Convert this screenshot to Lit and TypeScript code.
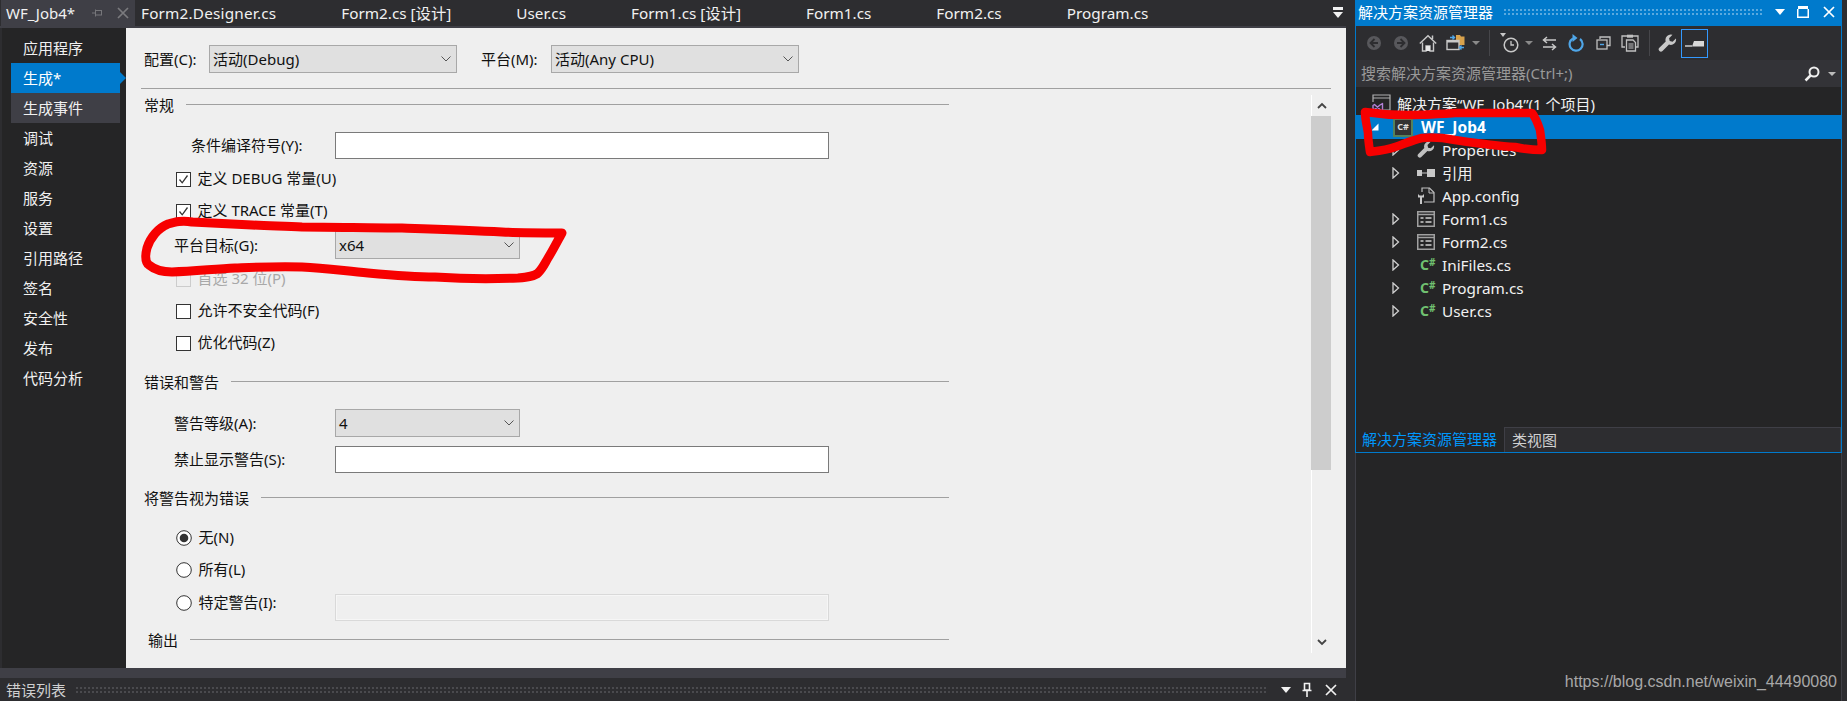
import { LitElement, html, css } from "lit";
import { customElement } from "lit/decorators.js";

const chev = html`<svg width="10" height="6" viewBox="0 0 10 6"><path d="M.5.5 5 5 9.500.5" fill="none" stroke="#555" stroke-width="1"/></svg>`;
const check = html`<svg width="13" height="13" viewBox="0 0 13 13"><path d="M2.500 6.500 5.200 9.800 10.500 2.500" fill="none" stroke="#333" stroke-width="1.300"/></svg>`;
const treeArrow = html`<svg width="8" height="12" viewBox="0 0 8 12"><path d="M1 1 6.500 6 1 11z" fill="#252526" stroke="#d0d0d0" stroke-width="1.300"/></svg>`;
const wrench = (s: number, c: string) => html`<svg width=${s} height=${s} viewBox="0 0 18 18"><path fill=${c} d="M17 4.200l-3.200 3.100-2.700-.6-.6-2.700L13.700.8A5 5 0 0 0 7.300 7L1.300 13a2.100 2.100 0 1 0 3 3L10.400 10A5 5 0 0 0 17 4.200z"/></svg>`;
const formIcon = html`<svg width="18" height="16" viewBox="0 0 18 16"><rect x=".75" y=".75" width="16.500" height="14.500" fill="#252526" stroke="#a0a0a0" stroke-width="1.500"/><path d="M1 3.500H17" stroke="#a0a0a0" stroke-width="1.500"/><path d="M3.500 7H6.500M3.500 11H6.500M8.500 7H14.500M8.500 11H14.500" stroke="#d0d0d0" stroke-width="1.600"/></svg>`;

type Node = { t: string; i: unknown };
const csIcon = html`<span class="cs">C<sup>#</sup></span>`;
const children: Node[] = [
  { t: "Properties", i: wrench(18, "#c0c0c0") },
  { t: "引用", i: html`<svg width="18" height="8" viewBox="0 0 18 8"><rect y="1" width="5" height="6" fill="#c8c8c8"/><path d="M5 4H10" stroke="#c8c8c8"/><rect x="10" width="8" height="8" fill="#c8c8c8"/></svg>` },
  { t: "App.config", i: html`<svg width="18" height="18" viewBox="0 0 18 18"><path d="M5 5V1H12.500L17 5.500V15H7" fill="none" stroke="#c0c0c0" stroke-width="1.200"/><path d="M12 1V6H17" fill="none" stroke="#c0c0c0"/><path d="M1 7V10.500H3V17H5V10.500H7V7L5.500 8.500H2.500z" fill="#c8c8c8"/></svg>` },
  { t: "Form1.cs", i: formIcon },
  { t: "Form2.cs", i: formIcon },
  { t: "IniFiles.cs", i: csIcon },
  { t: "Program.cs", i: csIcon },
  { t: "User.cs", i: csIcon },
];

@customElement("app-root")
export class AppRoot extends LitElement {
  static styles = css`
    :host { display: block; position: relative; width: 1847px; height: 701px; overflow: hidden; background: #2d2d30;
      font-family: "Noto Sans", "Noto Sans CJK SC", sans-serif; font-size: 15px; line-height: 20px; color: #111; }
    * { box-sizing: border-box; }
    svg { display: block; flex: none; }
    .app { display: flex; height: 701px; }
    .left { width: 1346px; display: flex; flex-direction: column; }
    .tabs { height: 26px; display: flex; align-items: center; gap: 65px; color: #f1f1f1; padding-right: 3px; font-size: 15.300px; white-space: nowrap; }
    .tabs > span:first-of-type { letter-spacing: 0.2px; }
    .tab-active { width: 134px; height: 26px; margin: 0 -59px 0 1px; background: #3f3f46; display: flex; align-items: center; padding-left: 5px; font-size: 15px; }
    .tab-active .name { width: 85px; }
    .tab-active .x { margin-left: 14px; }
    .more { margin-left: auto; }
    .strip { height: 2px; background: #3f3f46; flex: none; }
    .body { height: 640px; display: flex; flex: none; padding-left: 2px; }
    .nav { width: 124px; background: #252526; padding: 5px 6px 0 9px; color: #f1f1f1; }
    .nav div { height: 30px; line-height: 30px; padding-left: 12px; position: relative; }
    .nav .sel { background: #007acc; color: #fff; }
    .nav .sel::after { content: ""; position: absolute; left: 100%; top: 9px; border: 6px solid transparent; border-left-color: #007acc; }
    .nav .hov { background: #3f3f46; }
    .panel { flex: 1; background: #efefef; padding: 17px 15px 0; display: flex; flex-direction: column; }
    .cfg { height: 28px; display: flex; align-items: center; padding-left: 3px; }
    .cfg .l1 { width: 65px; } .cfg .l2 { width: 70px; margin-left: 24px; }
    .combo { height: 28px; background: #e0e0e0; border: 1px solid #a8a8a8; display: flex; align-items: center; justify-content: space-between; padding: 0 5px 0 3px; }
    .w248 { width: 248px; } .w185 { width: 185px; }
    .rule { height: 1px; background: #a0a0a0; margin-top: 15px; margin-bottom: 6px; flex: none; }
    .scroll { flex: 1; display: flex; min-height: 0; height: 558px; align-items: flex-start; }
    .content { flex: 1; }
    .head { height: 22px; width: 808px; display: flex; align-items: center; gap: 12px; padding-left: 3px; }
    .head span { margin-bottom: 2px; }
    .head i { flex: 1; height: 1px; background: #a0a0a0; margin-bottom: 4px; }
    .input { width: 494px; height: 27px; background: #fff; border: 1px solid #7a7a7a; }
    .input.off { background: #efefef; border: 1px solid #d9d9d9; box-shadow: inset 0 0 0 1px #f6f6f6; }
    .field { display: flex; align-items: center; padding-left: 33px; }
    .field label { width: 161px; padding-bottom: 1px; }
    .indent { padding-left: 50px; } .indent label { width: 144px; }
    .c { height: 32px; display: flex; align-items: center; gap: 7px; padding-left: 34.500px; padding-bottom: 2px; }
    .c .box, .c svg { margin-top: 2px; }
    .box { width: 15px; height: 15px; background: #fff; border: 1px solid #333; display: flex; align-items: center; justify-content: center; flex: none; }
    .box svg { margin: 0; }
    .c.dis { color: #a8a8a8; } .c.dis .box { border-color: #ccc; background: #efefef; }
    .sb { width: 20px; height: 558px; border-left: 1px solid #fff; display: flex; flex-direction: column; align-items: center; flex: none; }
    .sb .up { height: 21px; display: flex; align-items: center; }
    .sb .thumb { width: 20px; height: 354px; background: #cdcdcd; margin-left: -1px; }
    .sb .dn { margin-top: auto; height: 21px; display: flex; align-items: center; margin-bottom: 0; }
    .band { height: 10px; background: #3f3f46; flex: none; }
    .errbar { height: 23px; display: flex; align-items: center; padding: 0 9px 0 6px; color: #d0d0d0; }
    .grip { background-image: radial-gradient(circle at 1px 1px, #4a4a4e 0.8px, transparent 1px); background-size: 4px 4px; height: 6px; flex: 1; }
    .errbar .grip { margin: 0 14px 0 10px; }
    .errbar .ic { display: flex; align-items: center; gap: 11px; }

    .split { width: 9px; }
    .right { width: 487px; display: flex; flex-direction: column; }
    .expl { height: 453px; flex: none; border: 1px solid #007acc; border-width: 0 1px 1px; display: flex; flex-direction: column; }
    .title { height: 26px; flex: none; background: #007acc; color: #fff; display: flex; align-items: center; padding: 0 7px 2px 3px; margin: 0 -1px; }
    .title .grip { background-image: radial-gradient(circle at 1px 1px, #5aa9df 0.8px, transparent 1px); margin: 0 12px 0 11px; }
    .title .ic { display: flex; align-items: center; gap: 12px; }
    .tb { height: 34px; flex: none; display: flex; align-items: center; padding-left: 4px; }
    .slot { height: 30px; display: flex; align-items: center; justify-content: center; flex: none; }
    .s27 { width: 27px; } .s28 { width: 28px; } .s14 { width: 14px; } .s6 { width: 6px; } .s7 { width: 7px; } .s24 { width: 24px; } .s26 { width: 26px; } .s25 { width: 25px; }
    .sep { width: 1px; height: 26px; background: #46464a; flex: none; }
    .pinb { width: 27px; height: 29px; border: 1px solid #3399ff; display: flex; align-items: center; justify-content: center; flex: none; }
    .search { height: 27px; flex: none; background: #333337; color: #999; display: flex; align-items: center; padding: 0 5px; }
    .search span { flex: 1; padding-bottom: 1px; }
    .tree { flex: 1; background: #252526; padding-top: 5px; color: #f1f1f1; }
    .row { height: 23px; display: flex; align-items: center; }
    .row.s { height: 24px; background: #007acc; color: #fff; font-weight: 700; padding-left: 15px; font-size: 15.500px; }
    .r0 { padding-left: 16px; }
    .r2 { padding-left: 36px; padding-bottom: 1px; font-size: 15.300px; }
    .ar { width: 25px; display: flex; }
    .s .ar { width: 22px; }
    .iw { width: 25px; display: flex; align-items: center; }
    .s .iw { width: 28px; }
    .cs { color: #70c070; font-weight: 700; font-size: 14px; line-height: 14px; display: flex; padding-left: 3px; }
    .cs sup { font-size: 10px; line-height: 9px; margin: 0; }
    .proj { width: 20px; height: 19px; border: 2px solid #55815a; background: #333; color: #ddd; font-size: 9px; font-weight: 700; line-height: 14px; display: flex; justify-content: center; }
    .btabs { height: 25px; flex: none; display: flex; background: #252526; }
    .b1 { width: 148px; padding-left: 6px; color: #0097fb; line-height: 25px; white-space: nowrap; }
    .b2 { flex: 1; background: #2d2d30; border: 1px solid #3f3f46; border-bottom: 0; color: #d0d0d0; padding-left: 7px; line-height: 24px; }
    .lower { flex: 1; background: #252526; border: 1px solid #3f3f46; border-width: 0 1px; margin-right: 0; }
    .wm { position: absolute; right: 10px; bottom: 9px; color: #a8a8a8; font: 16px/20px "Liberation Sans", sans-serif; }
    .ink { position: absolute; inset: 0; pointer-events: none; }
  `;

  render() {
    const tabs = ["Form2.Designer.cs", "Form2.cs [设计]", "User.cs", "Form1.cs [设计]", "Form1.cs", "Form2.cs", "Program.cs"];
    const nav = ["应用程序", "生成*", "生成事件", "调试", "资源", "服务", "设置", "引用路径", "签名", "安全性", "发布", "代码分析"];
    const smallX = (c: string) => html`<svg width="12" height="12" viewBox="0 0 12 12"><path d="M1 1 11 11M11 1 1 11" stroke=${c} stroke-width="1.700"/></svg>`;
    return html`
      <div class="app">
        <div class="left">
          <div class="tabs">
            <div class="tab-active">
              <span class="name">WF_Job4*</span>
              <svg width="12" height="12" viewBox="0 0 12 12"><path d="M1 6H4M4.500 2.500V9.500M4.500 3.500H10M4.500 8H10M10.500 3V8.500" fill="none" stroke="#76767a"/></svg>
              <span class="x">${smallX("#7a7a7e")}</span>
            </div>
            ${tabs.map((t) => html`<span>${t}</span>`)}
            <svg class="more" width="10" height="12" viewBox="0 0 10 12"><rect width="10" height="3" y="0" fill="#f1f1f1"/><path d="M0 5H10L5 11z" fill="#f1f1f1"/></svg>
          </div>
          <div class="strip"></div>
          <div class="body">
            <div class="nav">
              ${nav.map((n, i) => html`<div class=${i === 1 ? "sel" : i === 2 ? "hov" : ""}>${n}</div>`)}
            </div>
            <div class="panel">
              <div class="cfg">
                <span class="l1">配置(C):</span>
                <div class="combo w248"><span>活动(Debug)</span>${chev}</div>
                <span class="l2">平台(M):</span>
                <div class="combo w248"><span>活动(Any CPU)</span>${chev}</div>
              </div>
              <div class="rule"></div>
              <div class="scroll">
                <div class="content">
                  <div class="head"><span>常规</span><i></i></div>
                  <div class="field indent" style="margin-top:15px"><label>条件编译符号(Y):</label><div class="input"></div></div>
                  <div class="c" style="margin-top:4px"><div class="box">${check}</div>定义 DEBUG 常量(U)</div>
                  <div class="c"><div class="box">${check}</div>定义 TRACE 常量(T)</div>
                  <div class="field" style="margin-top:4px"><label>平台目标(G):</label><div class="combo w185"><span>x64</span>${chev}</div></div>
                  <div class="c dis" style="margin-top:4px"><div class="box"></div>首选 32 位(P)</div>
                  <div class="c"><div class="box"></div>允许不安全代码(F)</div>
                  <div class="c"><div class="box"></div>优化代码(Z)</div>
                  <div class="head" style="margin-top:13px"><span>错误和警告</span><i></i></div>
                  <div class="field" style="margin-top:15px"><label>警告等级(A):</label><div class="combo w185"><span>4</span>${chev}</div></div>
                  <div class="field" style="margin-top:9px"><label>禁止显示警告(S):</label><div class="input"></div></div>
                  <div class="head" style="margin-top:15px"><span>将警告视为错误</span><i></i></div>
                  <div class="c" style="margin-top:12px">
                    <svg width="16" height="16" viewBox="0 0 16 16"><circle cx="8" cy="8" r="7.300" fill="#fff" stroke="#333"/><circle cx="8" cy="8" r="4.300" fill="#333"/></svg>无(N)
                  </div>
                  <div class="c">
                    <svg width="16" height="16" viewBox="0 0 16 16"><circle cx="8" cy="8" r="7.300" fill="#fff" stroke="#333"/></svg>所有(L)
                  </div>
                  <div class="field" style="align-items:flex-start;height:35px">
                    <label class="c" style="padding-left:1.500px">
                      <svg width="16" height="16" viewBox="0 0 16 16"><circle cx="8" cy="8" r="7.300" fill="#fff" stroke="#333"/></svg>特定警告(I):
                    </label>
                    <div class="input off" style="margin-top:8px"></div>
                  </div>
                  <div class="head" style="margin-top:9px;padding-left:7px"><span>输出</span><i></i></div>
                </div>
                <div class="sb">
                  <div class="up"><svg width="10" height="7" viewBox="0 0 10 7"><path d="M1 6 5 2 9 6" fill="none" stroke="#444" stroke-width="1.800"/></svg></div>
                  <div class="thumb"></div>
                  <div class="dn"><svg width="10" height="7" viewBox="0 0 10 7"><path d="M1 1 5 5 9 1" fill="none" stroke="#444" stroke-width="1.800"/></svg></div>
                </div>
              </div>
            </div>
          </div>
          <div class="band"></div>
          <div class="errbar">
            <span>错误列表</span>
            <div class="grip"></div>
            <div class="ic">
              <svg width="10" height="6" viewBox="0 0 10 6"><path d="M0 0H10L5 6z" fill="#f1f1f1"/></svg>
              <svg width="10" height="15" viewBox="0 0 10 15"><path d="M2.500 1.500H7.500V8H2.500zM.5 8.500H9.500M5 9V15" fill="none" stroke="#f1f1f1" stroke-width="1.600"/></svg>
              <span style="margin-left:2px">${smallX("#f1f1f1")}</span>
            </div>
          </div>
        </div>
        <div class="split"></div>
        <div class="right">
          <div class="expl">
            <div class="title">
              <span>解决方案资源管理器</span>
              <div class="grip"></div>
              <div class="ic">
                <svg width="10" height="6" viewBox="0 0 10 6"><path d="M0 0H10L5 6z" fill="#fff"/></svg>
                <svg width="12" height="12" viewBox="0 0 12 12"><path d="M1 1.500H11M.75 3V11.250H11.250V3" fill="none" stroke="#fff" stroke-width="1.500"/><path d="M1 1.500H11" stroke="#fff" stroke-width="3"/></svg>
                <span style="margin-left:2px">${smallX("#fff")}</span>
              </div>
            </div>
            <div class="tb">
              <div class="slot s27"><svg width="16" height="16" viewBox="0 0 16 16"><circle cx="8" cy="8" r="7" fill="#58585c"/><path d="M8.500 4 4.500 8 8.500 12M5 8H12" fill="none" stroke="#2d2d30" stroke-width="1.800"/></svg></div>
              <div class="slot s27"><svg width="16" height="16" viewBox="0 0 16 16"><circle cx="8" cy="8" r="7" fill="#58585c"/><path d="M7.500 4 11.500 8 7.500 12M11 8H4" fill="none" stroke="#2d2d30" stroke-width="1.800"/></svg></div>
              <div class="slot s27"><svg width="18" height="18" viewBox="0 0 18 18"><path d="M.8 9.500 9 1.800 17.200 9.500M13.500 1.500V5" fill="none" stroke="#c8c8c8" stroke-width="1.500"/><path d="M3.500 8.500V17H7V12H11V17H14.500V8.500" fill="none" stroke="#c8c8c8" stroke-width="1.400"/><rect x="7" y="12" width="4" height="5" fill="#e8e8e8"/></svg></div>
              <div class="slot s28"><svg width="19" height="18" viewBox="0 0 19 18"><path d="M10 1H14L15 2.500H18.500V11H10z" fill="#d8a24c"/><rect x="1" y="6.500" width="12" height="9" fill="#2d2d30" stroke="#c8c8c8" stroke-width="1.400"/><path d="M1 7.500H13" stroke="#c8c8c8" stroke-width="2"/><path d="M4 3.500H8M6.500 1.500 8.500 3.500 6.500 5.500M18 13.500H13.500M15.500 11.500 13.500 13.500 15.500 15.500" fill="none" stroke="#4fa6e8" stroke-width="1.400"/></svg></div>
              <div class="slot s14"><svg width="8" height="4" viewBox="0 0 8 4"><path d="M0 0H8L4 4z" fill="#8a8a8a"/></svg></div>
              <div class="slot s6"></div>
              <div class="sep"></div>
              <div class="slot s24" style="margin-left:8px"><svg width="20" height="20" viewBox="0 0 20 20"><path d="M0 0H6L3 4z" fill="#c8c8c8"/><circle cx="11" cy="12" r="6.800" fill="none" stroke="#c8c8c8" stroke-width="1.500"/><path d="M11 8V12H14" fill="none" stroke="#c8c8c8" stroke-width="1.300"/></svg></div>
              <div class="slot s14"><svg width="8" height="4" viewBox="0 0 8 4"><path d="M0 0H8L4 4z" fill="#8a8a8a"/></svg></div>
              <div class="slot s26"><svg width="15" height="15" viewBox="0 0 15 15"><path d="M14 4H2M5 1 1.500 4 5 7M1 11H13M10 8 13.500 11 10 14" fill="none" stroke="#c8c8c8" stroke-width="1.500"/></svg></div>
              <div class="slot s28"><svg width="16" height="18" viewBox="0 0 16 18"><path d="M5 4.500A6.500 6.500 0 1 0 12 5" fill="none" stroke="#4fa6e8" stroke-width="2.200"/><path d="M6.500 0V8L1.500 4z" fill="#4fa6e8" transform="rotate(180 5.500 4)"/></svg></div>
              <div class="slot s27"><svg width="15" height="14" viewBox="0 0 15 14"><path d="M4 3V1H14V9.500H11" fill="none" stroke="#c0c0c0" stroke-width="1.300"/><rect x="1" y="4" width="10" height="9" fill="#2d2d30" stroke="#c0c0c0" stroke-width="1.300"/><path d="M4 8.500H8" stroke="#4fa6e8" stroke-width="1.400"/></svg></div>
              <div class="slot s25"><svg width="18" height="18" viewBox="0 0 18 18"><path d="M4 13H1V2H6M12 2H17V13H15" fill="none" stroke="#c0c0c0" stroke-width="1.300"/><rect x="6" y=".7" width="6" height="3" fill="#c0c0c0"/><path d="M5.500 6H12L14.500 8.500V17H5.500z" fill="#2d2d30" stroke="#c0c0c0" stroke-width="1.300"/><path d="M7.500 10H12.500M7.500 12H12.500M7.500 14H12.500" stroke="#c0c0c0"/></svg></div>
              <div class="slot s7"></div>
              <div class="sep"></div>
              <div class="slot s24" style="margin-left:5px">${wrench(19, "#c8c8c8")}</div>
              <div class="pinb" style="margin-left:2px"><svg width="19" height="7" viewBox="0 0 19 7"><path d="M0 6H7" stroke="#d8d8d8" stroke-width="1.400"/><path d="M7 6.500H19V1H9z" fill="#d8d8d8"/></svg></div>
            </div>
            <div class="search">
              <span>搜索解决方案资源管理器(Ctrl+;)</span>
              <svg width="16" height="16" viewBox="0 0 16 16"><circle cx="10" cy="6" r="4.500" fill="none" stroke="#eee" stroke-width="2"/><path d="M6.500 9.500 1.500 14.500" stroke="#eee" stroke-width="2.500"/></svg>
              <svg style="margin-left:8px" width="8" height="4" viewBox="0 0 8 4"><path d="M0 0H8L4 4z" fill="#bbb"/></svg>
            </div>
            <div class="tree">
              <div class="row r0">
                <div class="iw"><svg width="19" height="19" viewBox="0 0 19 19"><path d="M5 1H18V16H11M1 8V1H5M1 4H18" fill="none" stroke="#b0b0b0" stroke-width="1.200"/><path d="M1 11.500 2.500 10.500 8 15.500 10.500 17V9.500L8 11 2.500 15.500 1 14.500z" fill="none" stroke="#b180d7" stroke-width="1.400" stroke-linejoin="round"/></svg></div>
                解决方案“WF_Job4”(1 个项目)
              </div>
              <div class="row s">
                <div class="ar"><svg width="8" height="8" viewBox="0 0 8 8"><path d="M7.500.5V7.500H.5z" fill="#fff"/></svg></div>
                <div class="iw"><div class="proj">C#</div></div>
                WF_Job4
              </div>
              ${children.map((c, i) => html`<div class="row r2"><div class="ar">${i === 2 ? "" : treeArrow}</div><div class="iw">${c.i}</div>${c.t}</div>`)}
            </div>
            <div class="btabs">
              <div class="b1">解决方案资源管理器</div>
              <div class="b2">类视图</div>
            </div>
          </div>
          <div class="lower"></div>
        </div>
      </div>
      <div class="wm">https://blog.csdn.net/weixin_44490080</div>
      <svg class="ink" width="1847" height="701" viewBox="0 0 1847 701" fill="none" stroke="#f70000" stroke-linecap="round" stroke-linejoin="round">
        <path stroke-width="9" d="M192 222C182 220 175 222 168 224C158 228 150 238 147 248C145 256 145 262 149 265C155 270 162 272 172 272C195 271 215 269 235 268C260 267 280 266 302 267C325 268 345 271 368 273C390 275 412 277 435 277C465 279 495 279 518 278C528 277 535 276 538 273C543 268 545 263 548 258C553 250 558 240 562 233C540 233 520 233 502 232C470 230 435 229 402 228C370 228 335 227 302 227C285 226 270 226 252 225C232 224 212 223 192 222"/>
        <path stroke-width="8.500" d="M1365 112C1378 114 1392 115 1405 115C1422 115 1438 114 1455 113C1480 113 1505 113 1532 113C1536 118 1538 124 1540 130C1541 137 1542 144 1542 150C1533 150 1524 149 1515 147C1495 146 1475 143 1455 140C1444 138 1433 137 1422 138C1413 140 1404 144 1395 147C1387 150 1378 151 1370 152C1369 145 1368 139 1368 133C1367 126 1365 119 1365 112"/>
      </svg>
    `;
  }
}
